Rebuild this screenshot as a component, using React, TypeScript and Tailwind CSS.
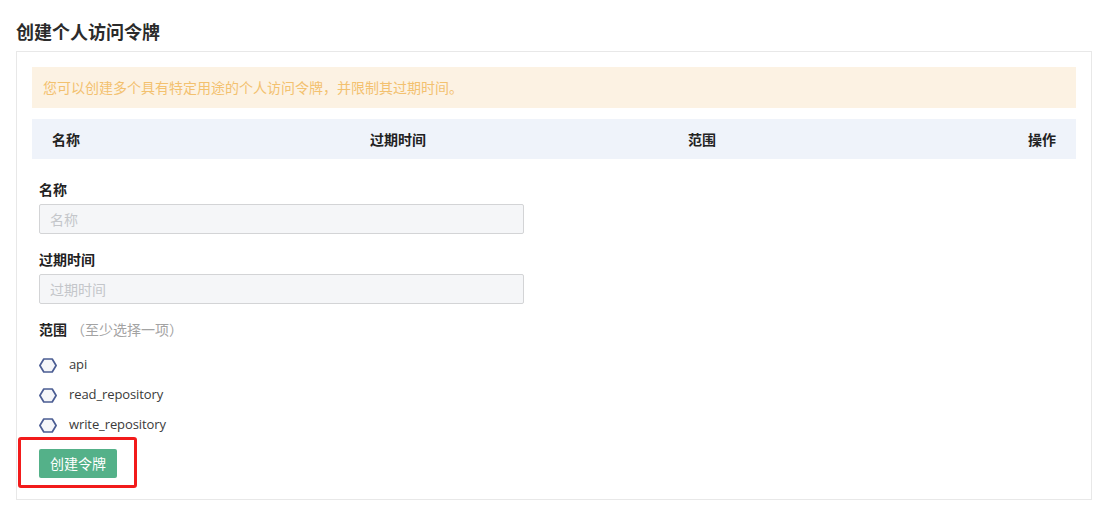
const SCOPES = ["api", "read_repository", "write_repository"];

const CJK = "font-['Noto_Sans_CJK_SC','Noto_Sans',sans-serif]";

function Hexagon() {
  return (
    <svg width="18" height="15" viewBox="0 0 18 15" className="shrink-0">
      <polygon
        points="4.8,1 13.2,1 17.1,7.5 13.2,14 4.8,14 0.9,7.5"
        fill="#f5f6f9"
        stroke="#4b5d93"
        strokeWidth="1.7"
        strokeLinejoin="round"
      />
    </svg>
  );
}

export default function App() {
  return (
    <div className={`min-h-screen bg-white text-[#333] ${CJK}`}>
      <div className="pl-4 pr-[5px] pt-[18px] pb-[10px]">
        <h1 className="text-[18px] leading-[26px] font-bold text-[#2b2b2b] mb-[7px]">创建个人访问令牌</h1>

        <div className="border border-[#e8e8e8] px-[15px] pt-[15px] pb-[21px]">
          {/* notice */}
          <div className="h-[41px] bg-[#fcf2e3] flex items-center px-[11px] text-[14px] text-[#f3c16f]">
            您可以创建多个具有特定用途的个人访问令牌，并限制其过期时间。
          </div>

          {/* token table header */}
          <div className="mt-[11px] h-[40px] bg-[#eff3fa] grid grid-cols-[318px_318px_318px_1fr] items-center px-5 text-[14px] font-semibold text-[#222]">
            <span>名称</span>
            <span>过期时间</span>
            <span>范围</span>
            <span className="text-right">操作</span>
          </div>

          {/* create form */}
          <div className="px-[7px] pt-[20px]">
            <label className="block text-[14px] leading-[20px] font-semibold text-[#222]">名称</label>
            <input
              placeholder="名称"
              className="mt-[5px] block w-[485px] h-[30px] rounded-[2px] border border-[#d3d4d6] bg-[#f5f6f8] px-[10px] text-[14px] placeholder:text-[#c4c6ca] outline-none"
            />

            <label className="mt-[15px] block text-[14px] leading-[20px] font-semibold text-[#222]">过期时间</label>
            <input
              placeholder="过期时间"
              className="mt-[5px] block w-[485px] h-[30px] rounded-[2px] border border-[#d3d4d6] bg-[#f5f6f8] px-[10px] text-[14px] placeholder:text-[#c4c6ca] outline-none"
            />

            <div className="mt-[15px] text-[14px] leading-[20px]">
              <span className="font-semibold text-[#222]">范围</span>
              <span className="ml-1 text-[#a3a3a3]">（至少选择一项）</span>
            </div>

            <div className="mt-[16px] flex flex-col gap-[10px]">
              {SCOPES.map((s) => (
                <div key={s} className="h-[20px] flex items-center gap-[12px]">
                  <Hexagon />
                  <span className="text-[13px] tracking-[-0.1px] text-[#3a3a3a] font-['Open_Sans',sans-serif]">{s}</span>
                </div>
              ))}
            </div>

            <div className="relative mt-[14px] w-fit">
              <button className="w-[78px] h-[29px] rounded-[2px] bg-[#54b189] text-white text-[14px]">创建令牌</button>
              <div className="absolute -left-[21px] -right-[20px] -top-[12px] -bottom-[10px] border-[3px] border-[#f21b1b] rounded-[3px] pointer-events-none" />
            </div>
          </div>
        </div>
      </div>
    </div>
  );
}
